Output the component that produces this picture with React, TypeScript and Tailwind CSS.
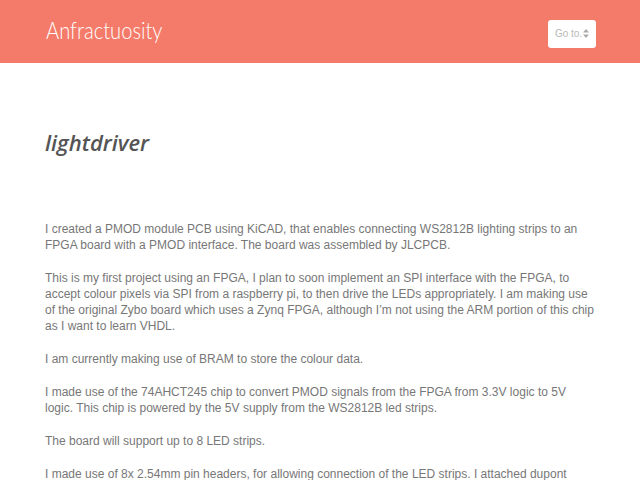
const paragraphs = [
  "I created a PMOD module PCB using KiCAD, that enables connecting WS2812B lighting strips to an FPGA board with a PMOD interface. The board was assembled by JLCPCB.",
  "This is my first project using an FPGA, I plan to soon implement an SPI interface with the FPGA, to accept colour pixels via SPI from a raspberry pi, to then drive the LEDs appropriately. I am making use of the original Zybo board which uses a Zynq FPGA, although I\u2019m not using the ARM portion of this chip as I want to learn VHDL.",
  "I am currently making use of BRAM to store the colour data.",
  "I made use of the 74AHCT245 chip to convert PMOD signals from the FPGA from 3.3V logic to 5V logic. This chip is powered by the 5V supply from the WS2812B led strips.",
  "The board will support up to 8 LED strips.",
  "I made use of 8x 2.54mm pin headers, for allowing connection of the LED strips. I attached dupont connectors to the strips so they can be plugged in and removed easily.",
]

export default function App() {
  return (
    <div className="min-h-screen bg-white">
      <header className="h-[63px] bg-[#f47a69] flex items-center justify-between pl-[46px] pr-[44px]">
        <span className="text-white text-[24px] font-light font-['Lato',sans-serif] pb-[4px] origin-left scale-x-[0.84] inline-block">
          Anfractuosity
        </span>
        <button className="h-[28px] w-[48px] bg-white rounded-[3px] flex items-center justify-center gap-[1px] text-[#b8b8b8] text-[10px] font-['Liberation_Sans',Arial,sans-serif] mt-[4px]">
          Go to.
          <svg width="6" height="9" viewBox="0 0 6 9" className="text-[#aaa]">
            <path d="M3 0 L6 3.5 L0 3.5 Z M3 9 L6 5.5 L0 5.5 Z" fill="currentColor" />
          </svg>
        </button>
      </header>

      <main className="px-[45px]">
        <h1 className="mt-[64px] mb-[64px] text-[22px] leading-[30px] italic font-semibold text-[#555] font-['Open_Sans',sans-serif]">
          lightdriver
        </h1>
        <div className="flex flex-col gap-[17px] text-[12px] leading-[16px] text-[#777] font-['Liberation_Sans',Arial,sans-serif]">
          {paragraphs.map((p, i) => (
            <p key={i}>{p}</p>
          ))}
        </div>
      </main>
    </div>
  )
}
